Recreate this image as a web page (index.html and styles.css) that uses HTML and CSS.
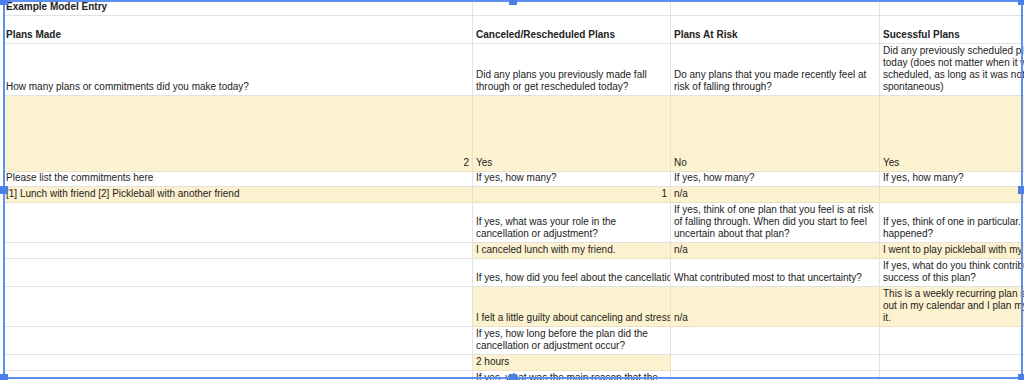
FILE: index.html
```html
<!DOCTYPE html>
<html lang="en">
<head>
  <meta charset="UTF-8" />
  <title>Example Model Entry</title>
  <link rel="stylesheet" href="styles.css">
</head>
<body>
<div class="viewport">
  <div class="sheet">
    <!-- row 1 -->
    <div class="cell head">Example Model Entry</div>
    <div class="cell"></div>
    <div class="cell"></div>
    <div class="cell"></div>
    <!-- row 2 -->
    <div class="cell head">Plans Made</div>
    <div class="cell head">Canceled/Rescheduled Plans</div>
    <div class="cell head">Plans At Risk</div>
    <div class="cell head">Sucessful Plans</div>
    <!-- row 3 -->
    <div class="cell">How many plans or commitments did you make today?</div>
    <div class="cell">Did any plans you previously made fall<br>through or get rescheduled today?</div>
    <div class="cell">Do any plans that you made recently feel at<br>risk of falling through?</div>
    <div class="cell">Did any previously scheduled plans happen<br>today (does not matter when it was<br>scheduled, as long as it was not<br>spontaneous)</div>
    <!-- row 4 -->
    <div class="cell hl num">2</div>
    <div class="cell hl">Yes</div>
    <div class="cell hl">No</div>
    <div class="cell hl">Yes</div>
    <!-- row 5 -->
    <div class="cell">Please list the commitments here</div>
    <div class="cell">If yes, how many?</div>
    <div class="cell">If yes, how many?</div>
    <div class="cell">If yes, how many?</div>
    <!-- row 6 -->
    <div class="cell hl">[1] Lunch with friend [2] Pickleball with another friend</div>
    <div class="cell hl num">1</div>
    <div class="cell hl">n/a</div>
    <div class="cell hl"></div>
    <!-- row 7 -->
    <div class="cell"></div>
    <div class="cell">If yes, what was your role in the<br>cancellation or adjustment?</div>
    <div class="cell">If yes, think of one plan that you feel is at risk<br>of falling through. When did you start to feel<br>uncertain about that plan?</div>
    <div class="cell">If yes, think of one in particular. What<br>happened?</div>
    <!-- row 8 -->
    <div class="cell"></div>
    <div class="cell hl">I canceled lunch with my friend.</div>
    <div class="cell hl">n/a</div>
    <div class="cell hl">I went to play pickleball with my friend.</div>
    <!-- row 9 -->
    <div class="cell"></div>
    <div class="cell">If yes, how did you feel about the cancellation or adjustment?</div>
    <div class="cell">What contributed most to that uncertainty?</div>
    <div class="cell">If yes, what do you think contributed to the<br>success of this plan?</div>
    <!-- row 10 -->
    <div class="cell"></div>
    <div class="cell hl">I felt a little guilty about canceling and stressed about rescheduling.</div>
    <div class="cell hl">n/a</div>
    <div class="cell hl">This is a weekly recurring plan set<br>out in my calendar and I plan my week around<br>it.</div>
    <!-- row 11 -->
    <div class="cell"></div>
    <div class="cell">If yes, how long before the plan did the<br>cancellation or adjustment occur?</div>
    <div class="cell"></div>
    <div class="cell"></div>
    <!-- row 12 -->
    <div class="cell"></div>
    <div class="cell hl">2 hours</div>
    <div class="cell"></div>
    <div class="cell"></div>
    <!-- row 13 -->
    <div class="cell"></div>
    <div class="cell">If yes, what was the main reason that the<br>plan was canceled or adjusted?</div>
    <div class="cell"></div>
    <div class="cell"></div>
  </div>

  <div class="selection">
    <span class="handle tl"></span>
    <span class="handle tm"></span>
    <span class="handle tr"></span>
    <span class="handle ml"></span>
    <span class="handle mr"></span>
    <span class="handle bl"></span>
    <span class="handle bm"></span>
    <span class="handle br"></span>
  </div>
</div>
</body>
</html>
```

FILE: styles.css
```css
body {
  margin: 0;
  padding: 0;
  background-color: #fff;
  font-family: 'Liberation Sans', Arial, sans-serif;
  font-size: 10px;
  color: #222;
  overflow: hidden;
}

.viewport {
  position: relative;
  width: 1024px;
  height: 380px;
  overflow: hidden;
}

.sheet {
  display: grid;
  grid-template-columns: 470px 198px 209px 220px;
  grid-template-rows: 16px 28px 52px 76px 15px 16px 40px 16px 28px 40px 28px 16px 28px;
  margin-left: 3px;
}

.cell {
  display: flex;
  flex-direction: column;
  justify-content: flex-end;
  box-sizing: border-box;
  padding: 0 3px 2px;
  line-height: 12px;
  white-space: nowrap;
  overflow: hidden;
  border-right: 1px solid #e2e2e2;
  border-bottom: 1px solid #e2e2e2;
  background-color: #fff;
}

.head {
  font-weight: bold;
}

.hl {
  background-color: #fdf2cf;
  border-color: #ebe2c6;
}

.num {
  text-align: right;
}

/* selection outline drawn over the grid */
.selection {
  position: absolute;
  left: 3px;
  top: 0;
  width: 1020px;
  height: 379px;
  box-sizing: border-box;
  border: 2px solid #5b8ff0;
  pointer-events: none;
}

.handle {
  position: absolute;
  width: 8px;
  height: 8px;
  background-color: #4a7fe9;
}

.tl { left: -5px; top: -5px; }
.tm { left: calc(50% - 4px); top: -5px; }
.tr { right: -5px; top: -5px; }
.ml { left: -5px; top: calc(50% - 4px); }
.mr { right: -5px; top: calc(50% - 4px); }
.bl { left: -5px; bottom: -5px; }
.bm { left: calc(50% - 4px); bottom: -5px; }
.br { right: -5px; bottom: -5px; }
```
